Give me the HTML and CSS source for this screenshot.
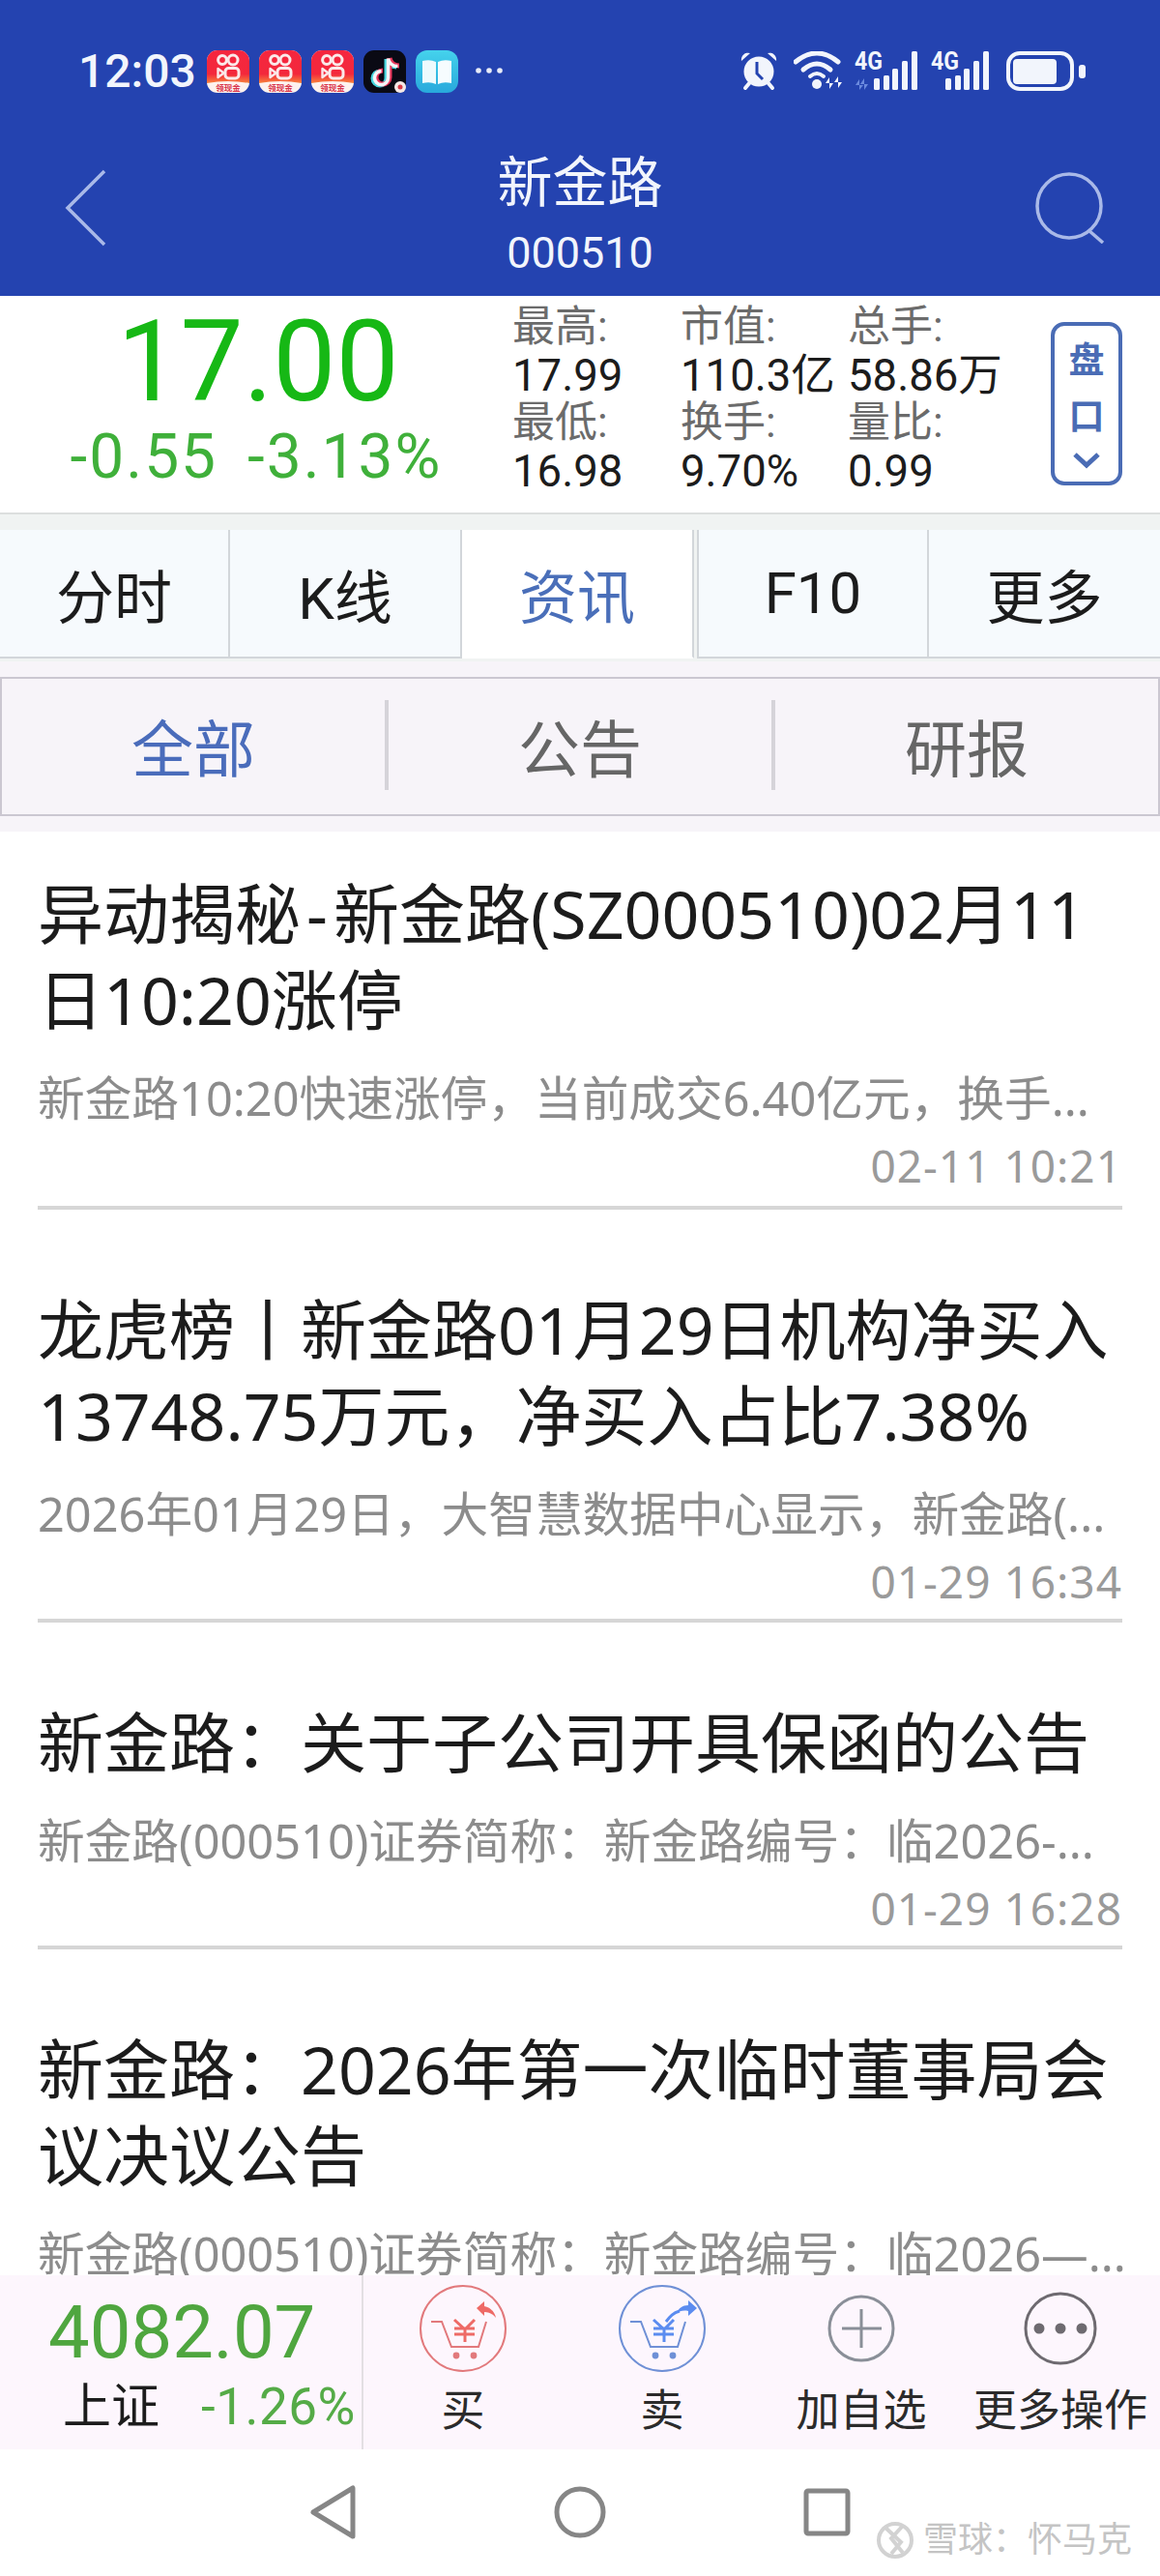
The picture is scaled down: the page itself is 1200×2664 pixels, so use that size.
FILE: index.html
```html
<!DOCTYPE html>
<html lang="zh-CN">
<head>
    <meta charset="UTF-8">
    <title>新金路</title>
    <link rel="stylesheet" href="styles.css">
</head>
<body>
    <svg class="defs" width="0" height="0">
        <defs>
            <linearGradient id="ksRed" x1="0" y1="0" x2="0" y2="1">
                <stop offset="0" stop-color="#f5263f"/>
                <stop offset="0.72" stop-color="#f3283c"/>
                <stop offset="1" stop-color="#f7823c"/>
            </linearGradient>
            <linearGradient id="bookBlue" x1="0" y1="0" x2="0" y2="1">
                <stop offset="0" stop-color="#45d2ec"/>
                <stop offset="1" stop-color="#28a9dc"/>
            </linearGradient>
            <symbol id="ksIcon" viewBox="0 0 44 44">
                <rect width="44" height="44" rx="11" fill="#fdf2ee"/>
                <path d="M11 0h22a11 11 0 0 1 11 11v23q-22 -4 -44 0v-23a11 11 0 0 1 11 -11z" fill="url(#ksRed)"/>
                <circle cx="16" cy="10" r="4.400" fill="none" stroke="#fbe9e9" stroke-width="3"/>
                <circle cx="27" cy="10" r="5" fill="none" stroke="#fbe9e9" stroke-width="3"/>
                <rect x="19" y="18.500" width="14" height="10.500" rx="3.500" fill="none" stroke="#fbe9e9" stroke-width="3"/>
                <path d="M11.500 19l6 4.500l-6 4.500z" fill="none" stroke="#fbe9e9" stroke-width="2.400" stroke-linejoin="round"/>
                <text x="22" y="41.500" class="ks-label">领现金</text>
            </symbol>
            <symbol id="cartBase" viewBox="0 0 92 92">
                <path d="M13 39h11l10 26h28l8 -26" fill="none" stroke="currentColor" stroke-width="2"/>
                <circle cx="39" cy="74" r="3.400" fill="currentColor"/>
                <circle cx="57" cy="74" r="3.400" fill="currentColor"/>
                <circle cx="46" cy="46" r="44" fill="none" stroke="currentColor" stroke-width="2"/>
            </symbol>
        </defs>
    </svg>

    <div class="page">
        <header class="top">
            <div class="status">
                <div class="status-left">
                    <span class="clock">12:03</span>
                    <svg class="app" width="44" height="44"><use href="#ksIcon"/></svg>
                    <svg class="app" width="44" height="44"><use href="#ksIcon"/></svg>
                    <svg class="app" width="44" height="44"><use href="#ksIcon"/></svg>
                    <svg class="app" width="44" height="44" viewBox="0 0 44 44">
                        <rect width="44" height="44" rx="11" fill="#0a0a14"/>
                        <g fill="none" stroke-width="5">
                            <path d="M24 9v20a7 7 0 1 1 -7 -7M24 9c1 5 5 8 10 8" stroke="#45d6de"/>
                            <path d="M27 8v20a7 7 0 1 1 -7 -7M27 8c1 5 5 8 10 8" stroke="#e8345a"/>
                            <path d="M25.500 8.500v20a7 7 0 1 1 -7 -7M25.500 8.500c1 5 5 8 10 8" stroke="#f4f6f8" stroke-width="3.600"/>
                        </g>
                        <circle cx="38" cy="38" r="6" fill="#f5e9e6"/>
                        <circle cx="38" cy="38" r="2.500" fill="#d93a48"/>
                    </svg>
                    <svg class="app" width="44" height="44" viewBox="0 0 44 44">
                        <rect width="44" height="44" rx="12" fill="url(#bookBlue)"/>
                        <path d="M7 11q8 -2 14 1v23q-6 -3 -14 -1z" fill="#eefafd"/>
                        <path d="M37 11q-8 -2 -14 1v23q6 -3 14 -1z" fill="#f6fcfe"/>
                    </svg>
                    <svg class="more-dots" width="30" height="8" viewBox="0 0 30 8">
                        <circle cx="4" cy="4" r="2.800"/><circle cx="15" cy="4" r="2.800"/><circle cx="26" cy="4" r="2.800"/>
                    </svg>
                </div>
                <div class="status-right">
                    <svg width="40" height="41" viewBox="0 0 40 41">
                        <path d="M2 10a7 7 0 0 1 9 -8zM38 10a7 7 0 0 0 -9 -8z" fill="#f2f5fc"/>
                        <circle cx="20" cy="21" r="15.500" fill="#f2f5fc"/>
                        <path d="M6 38l5 -6M34 38l-5 -6" stroke="#f2f5fc" stroke-width="4" stroke-linecap="round"/>
                        <path d="M18 11v12l6 6" fill="none" stroke="#2443b0" stroke-width="3"/>
                    </svg>
                    <svg class="wifi" width="52" height="40" viewBox="0 0 52 40" fill="none" stroke="#f2f5fc" stroke-linecap="round">
                        <path d="M2 11Q24 -7 46 11" stroke-width="5"/>
                        <path d="M10 19Q24 7 38 19" stroke-width="5"/>
                        <path d="M17 26Q24 20 31 26" stroke-width="4"/>
                        <circle cx="24" cy="34" r="5" fill="#f2f5fc" stroke="none"/>
                        <path d="M37 39V27l-4 6h8M46 26v12l4 -6h-8" fill="#f2f5fc" stroke="none"/>
                    </svg>
                    <svg class="signal" width="66" height="48" viewBox="0 -7 66 48">
                        <text x="0" y="19" class="net" textLength="29" lengthAdjust="spacingAndGlyphs">4G</text>
                        <path d="M5 40V29l-4 6h8M10 28v12l4 -6h-8" fill="#6b8ade"/>
                        <g fill="#f2f5fc">
                            <rect x="20" y="28" width="6" height="12" rx="1.500"/>
                            <rect x="30" y="25" width="6" height="15" rx="1.500"/>
                            <rect x="39" y="18" width="6" height="22" rx="1.500"/>
                            <rect x="49" y="10" width="6" height="30" rx="1.500"/>
                            <rect x="59" y="0" width="6" height="40" rx="1.500"/>
                        </g>
                    </svg>
                    <svg class="signal second" width="62" height="48" viewBox="0 -7 62 48">
                        <text x="0" y="19" class="net" textLength="29" lengthAdjust="spacingAndGlyphs">4G</text>
                        <g fill="#f2f5fc">
                            <rect x="15" y="28" width="6" height="12" rx="1.500"/>
                            <rect x="25" y="25" width="6" height="15" rx="1.500"/>
                            <rect x="34" y="18" width="6" height="22" rx="1.500"/>
                            <rect x="44" y="10" width="6" height="30" rx="1.500"/>
                            <rect x="54" y="0" width="6" height="40" rx="1.500"/>
                        </g>
                    </svg>
                    <svg class="battery" width="82" height="41" viewBox="0 0 82 41">
                        <rect x="2" y="2" width="66" height="37" rx="12" fill="none" stroke="#f2f5fc" stroke-width="4"/>
                        <rect x="7" y="8" width="45" height="26" rx="4" fill="#f2f5fc"/>
                        <rect x="75" y="14" width="7" height="14" rx="3" fill="#f2f5fc"/>
                    </svg>
                </div>
            </div>
            <div class="stock-bar">
                <svg class="back" width="44" height="80" viewBox="0 0 44 80">
                    <path d="M41 2L3 40l38 38" fill="none" stroke="#a9b9e8" stroke-width="3.500"/>
                </svg>
                <div class="stock-name">
                    <div class="name">新金路</div>
                    <div class="code">000510</div>
                </div>
                <svg class="search" width="74" height="74" viewBox="0 0 74 74">
                    <circle cx="36" cy="35" r="33" fill="none" stroke="#a9b9e8" stroke-width="3.500"/>
                    <path d="M56 60l15 13" stroke="#a9b9e8" stroke-width="3.500"/>
                </svg>
            </div>
        </header>

        <section class="quote">
            <div class="price-box">
                <div class="price">17.00</div>
                <div class="change"><span>-0.55</span><span>-3.13%</span></div>
            </div>
            <div class="stats">
                <div class="stat-label">最高:</div><div class="stat-label">市值:</div><div class="stat-label">总手:</div>
                <div class="stat-value">17.99</div><div class="stat-value">110.3亿</div><div class="stat-value">58.86万</div>
                <div class="stat-label">最低:</div><div class="stat-label">换手:</div><div class="stat-label">量比:</div>
                <div class="stat-value">16.98</div><div class="stat-value">9.70%</div><div class="stat-value">0.99</div>
            </div>
            <div class="handicap">
                <span>盘</span>
                <span>口</span>
                <svg width="30" height="18" viewBox="0 0 30 18">
                    <path d="M3 3l12 11l12 -11" fill="none" stroke="#4a6cb5" stroke-width="5"/>
                </svg>
            </div>
        </section>

        <nav class="tabs">
            <div class="tab">分时</div>
            <div class="tab">K线</div>
            <div class="tab active">资讯</div>
            <div class="tab">F10</div>
            <div class="tab">更多</div>
        </nav>

        <div class="filter-wrap">
            <div class="filter">
                <div class="filter-item selected">全部</div>
                <div class="filter-item">公告</div>
                <div class="filter-item">研报</div>
            </div>
        </div>

        <main class="news">
            <article class="news-item">
                <h3>异动揭秘<span class="dash">-</span>新金路(SZ000510)02月11<br>日10:20涨停</h3>
                <p class="summary">新金路10:20快速涨停，当前成交6.40亿元，换手...</p>
                <div class="time">02-11 10:21</div>
            </article>
            <article class="news-item">
                <h3>龙虎榜丨新金路01月29日机构净买入<br>13748.75万元，净买入占比7.38%</h3>
                <p class="summary">2026年01月29日，大智慧数据中心显示，新金路(...</p>
                <div class="time">01-29 16:34</div>
            </article>
            <article class="news-item">
                <h3>新金路：关于子公司开具保函的公告</h3>
                <p class="summary">新金路(000510)证券简称：新金路编号：临2026-...</p>
                <div class="time">01-29 16:28</div>
            </article>
            <article class="news-item">
                <h3>新金路：2026年第一次临时董事局会<br>议决议公告</h3>
                <p class="summary">新金路(000510)证券简称：新金路编号：临2026—...</p>
            </article>
        </main>

        <footer class="trade-bar">
            <div class="index-box">
                <div class="index-value">4082.07</div>
                <div class="index-row"><span class="index-name">上证</span><span class="index-change">-1.26%</span></div>
            </div>
            <div class="action">
                <svg class="buy" width="92" height="92" viewBox="0 0 92 92">
                    <use href="#cartBase"/>
                    <path d="M37 37l11 10l10 -10M48 47v13M37 46h21M37 52h21" fill="none" stroke="#ee6a66" stroke-width="3"/>
                    <path d="M60 25l8 -7v5c6 1 11 6 12 12c-3 -4 -7 -6 -12 -6v4z" fill="#ee6a66"/>
                </svg>
                <span>买</span>
            </div>
            <div class="action">
                <svg class="sell" width="92" height="92" viewBox="0 0 92 92">
                    <use href="#cartBase"/>
                    <path d="M37 37l11 10l10 -10M48 47v13M37 46h21M37 52h21" fill="none" stroke="#5b8cf0" stroke-width="3"/>
                    <path d="M50 39c4 -5 7 -9 14 -11" fill="none" stroke="#5b8cf0" stroke-width="3"/>
                    <path d="M82 25l-9 -8v5c-6 0 -10 3 -12 8c3 -2 7 -3 12 -2v5z" fill="#5b8cf0"/>
                </svg>
                <span>卖</span>
            </div>
            <div class="action">
                <svg width="92" height="92" viewBox="0 0 92 92">
                    <circle cx="46" cy="46" r="33" fill="none" stroke="#8a8f98" stroke-width="3"/>
                    <path d="M26 46h41M46 26v40" stroke="#8a8f98" stroke-width="3"/>
                </svg>
                <span>加自选</span>
            </div>
            <div class="action">
                <svg width="92" height="92" viewBox="0 0 92 92">
                    <circle cx="46" cy="46" r="36" fill="none" stroke="#6e6a70" stroke-width="3"/>
                    <circle cx="24" cy="46" r="5.500" fill="#6e6a70"/>
                    <circle cx="46" cy="46" r="5.500" fill="#6e6a70"/>
                    <circle cx="68" cy="46" r="5.500" fill="#6e6a70"/>
                </svg>
                <span>更多操作</span>
            </div>
        </footer>

        <div class="sys-nav">
            <svg width="60" height="60" viewBox="0 0 60 60">
                <path d="M50 5v50L9 30z" fill="none" stroke="#868686" stroke-width="5" stroke-linejoin="round"/>
            </svg>
            <svg width="60" height="60" viewBox="0 0 60 60">
                <circle cx="30" cy="30" r="24" fill="none" stroke="#868686" stroke-width="5"/>
            </svg>
            <svg width="60" height="60" viewBox="0 0 60 60">
                <rect x="9" y="8" width="43" height="44" rx="2" fill="none" stroke="#868686" stroke-width="5"/>
            </svg>
            <div class="watermark">
                <svg width="40" height="40" viewBox="0 0 40 40" fill="none" stroke="#d2d2d2" stroke-width="4">
                    <circle cx="20" cy="20" r="17"/>
                    <path d="M10 7l16 15l-10 12M28 5l-12 13l12 15"/>
                </svg>
                <span>雪球：怀马克</span>
            </div>
        </div>
    </div>
</body>
</html>
```

FILE: styles.css
```css
* {
    box-sizing: border-box;
}

html, body {
    margin: 0;
    padding: 0;
}

body {
    font-family: Roboto, "Noto Sans CJK SC", sans-serif;
    background-color: #fff;
    color: #1c1c1c;
}

.defs {
    position: absolute;
}

.page {
    width: 1200px;
    height: 2664px;
    display: flex;
    flex-direction: column;
    overflow: hidden;
}

/* 顶部蓝色区域 */
.top {
    height: 306px;
    flex: none;
    background-color: #2443b0;
    color: #f2f5fc;
}

.status {
    height: 146px;
    padding: 53px 77px 0 81px;
    display: flex;
    justify-content: space-between;
}

.status-left {
    display: flex;
    align-items: flex-start;
}

.clock {
    font-size: 48px;
    font-weight: 500;
    line-height: 42px;
    width: 133px;
}

.app {
    margin-right: 10px;
    margin-top: -1px;
}

.ks-label {
    font-family: "Noto Sans CJK SC", sans-serif;
    font-size: 8.500px;
    font-weight: 700;
    fill: #d9354c;
    text-anchor: middle;
}

.more-dots {
    margin: 16px 0 0 7px;
    fill: #e8ecf8;
}

.status-right {
    display: flex;
    align-items: flex-start;
    gap: 12px;
}

.status-right svg {
    flex: none;
}

.wifi {
    margin-left: 4px;
}

.signal {
    margin-top: -7px;
    margin-left: -1px;
}

.signal.second {
    margin-left: 1px;
}

.battery {
    margin-left: 4px;
}

.net {
    font-family: Roboto, sans-serif;
    font-size: 26px;
    font-weight: 700;
    fill: #f2f5fc;
}

.stock-bar {
    display: grid;
    grid-template-columns: 1fr auto 1fr;
    align-items: center;
    padding: 0 56px;
}

.back {
    margin: -8px 0 0 11px;
}

.search {
    justify-self: end;
    margin-top: -8px;
}

.stock-name {
    text-align: center;
    padding-top: 6px;
}

.name {
    font-size: 57px;
    line-height: 72px;
    margin-top: 2px;
}

.code {
    font-size: 45px;
    line-height: 60px;
    margin-top: 6px;
}

/* 行情 */
.quote {
    height: 226px;
    flex: none;
    display: flex;
    background-color: #fff;
    border-bottom: 2px solid #dcdfde;
}

.price-box {
    width: 530px;
    text-align: center;
}

.price {
    font-size: 116px;
    line-height: 118px;
    margin-top: 9px;
    padding-left: 4px;
    color: #16b815;
}

.change {
    display: flex;
    justify-content: center;
    gap: 31px;
    font-size: 64px;
    line-height: 66px;
    letter-spacing: 2px;
    margin-top: 7px;
    color: #3fb03a;
}

.stats {
    width: 540px;
    display: grid;
    grid-template-columns: 174px 173px auto;
    grid-auto-rows: 49.500px;
    padding-top: 8px;
}

.stat-label {
    font-size: 44px;
    line-height: 49px;
    color: #6b6b6b;
}

.stat-value {
    font-size: 45.500px;
    line-height: 49px;
    white-space: nowrap;
}

.handicap {
    width: 74px;
    height: 169px;
    margin: 27px 0 0 17px;
    border: 4px solid #4a6cb5;
    border-radius: 14px;
    display: flex;
    flex-direction: column;
    align-items: center;
    color: #4a6cb5;
    font-size: 37px;
    font-weight: 700;
    line-height: 58px;
    padding-top: 8px;
}

.handicap svg {
    margin-top: 6px;
}

/* 分时 K线 标签 */
.tabs {
    flex: none;
    height: 152px;
    padding-top: 16px;
    display: flex;
    background-color: #f0f3f2;
}

.tab {
    width: 240px;
    height: 133px;
    display: flex;
    align-items: center;
    justify-content: center;
    font-size: 60px;
    background-color: #f6fafd;
    border-bottom: 2px solid #d2d6da;
    border-right: 2px solid #d2d6da;
}

.tab:first-child {
    width: 238px;
}

.tab.active {
    color: #4a6fb9;
    background-color: #fff;
    border-bottom-color: #fff;
}

.tab.active + .tab {
    margin-left: 3px;
    border-left: 2px solid #d2d6da;
}

.tab:last-child {
    border-right: 0;
    flex: 1;
    width: auto;
}

.filter-wrap {
    flex: none;
    height: 176px;
    padding-top: 16px;
    background-color: #f7f4f9;
}

.filter {
    height: 144px;
    display: flex;
    align-items: center;
    padding-bottom: 4px;
    border: 2px solid #cbc7d1;
}

.filter-item {
    flex: 1;
    height: 93px;
    display: flex;
    align-items: center;
    justify-content: center;
    font-size: 64px;
    color: #666;
    border-right: 4px solid #d5d3d9;
}

.filter-item:last-child {
    border-right: 0;
}

.filter-item.selected {
    color: #4a6cbb;
}

/* 资讯列表 */
.news {
    flex: 1;
    min-height: 0;
    overflow: hidden;
    background-color: #fff;
    padding: 0 39px;
    font-family: "Noto Sans", "Noto Sans CJK SC", sans-serif;
}

.news-item {
    padding-top: 79px;
    padding-bottom: 9px;
    border-bottom: 4px solid #d6d6d6;
}

.news-item:first-child {
    padding-top: 40px;
    padding-bottom: 12px;
}

.news-item:last-child {
    border-bottom: 0;
}

.news-item h3 {
    margin: 0;
    font-size: 68px;
    font-weight: 400;
    line-height: 89px;
    white-space: nowrap;
}

.dash {
    padding: 0 6px;
}

.summary {
    margin: 27px 0 0;
    font-size: 48.700px;
    line-height: 60px;
    color: #8c8c8c;
    white-space: nowrap;
}

.time {
    margin-top: 10px;
    text-align: right;
    font-size: 46px;
    line-height: 60px;
    letter-spacing: 1px;
    color: #9a9a9a;
}

/* 底部交易栏 */
.trade-bar {
    flex: none;
    height: 180px;
    display: flex;
    background-color: #fdf6fd;
}

.index-box {
    width: 376px;
    flex: none;
    border-right: 2px solid #e3dfe3;
    padding-left: 50px;
}

.index-value {
    font-size: 76px;
    line-height: 86px;
    margin-top: 16px;
    color: #4fa63f;
}

.index-row {
    display: flex;
    align-items: center;
    padding-left: 15px;
    line-height: 60px;
    margin-top: 4px;
}

.index-name {
    font-size: 50px;
    width: 143px;
}

.index-change {
    font-size: 53px;
    letter-spacing: 0.500px;
    color: #55ab47;
    white-space: nowrap;
}

.action {
    flex: 1;
    display: flex;
    flex-direction: column;
    align-items: center;
    font-size: 45px;
    line-height: 60px;
    padding-top: 9px;
    color: #2b2b2b;
}

.action span {
    white-space: nowrap;
    margin-top: 10px;
}

.buy {
    color: #e2797c;
}

.sell {
    color: #6f90d6;
}

/* 系统导航 */
.sys-nav {
    flex: none;
    height: 131px;
    position: relative;
    display: flex;
    justify-content: center;
    gap: 195px;
    padding-top: 35px;
    background-color: #fff;
}

.watermark {
    position: absolute;
    left: 906px;
    top: 74px;
    display: flex;
    align-items: center;
    gap: 9px;
    font-size: 36px;
    line-height: 40px;
    color: #c4c4c4;
    text-shadow: 0 0 2px #fff;
    white-space: nowrap;
}
```
